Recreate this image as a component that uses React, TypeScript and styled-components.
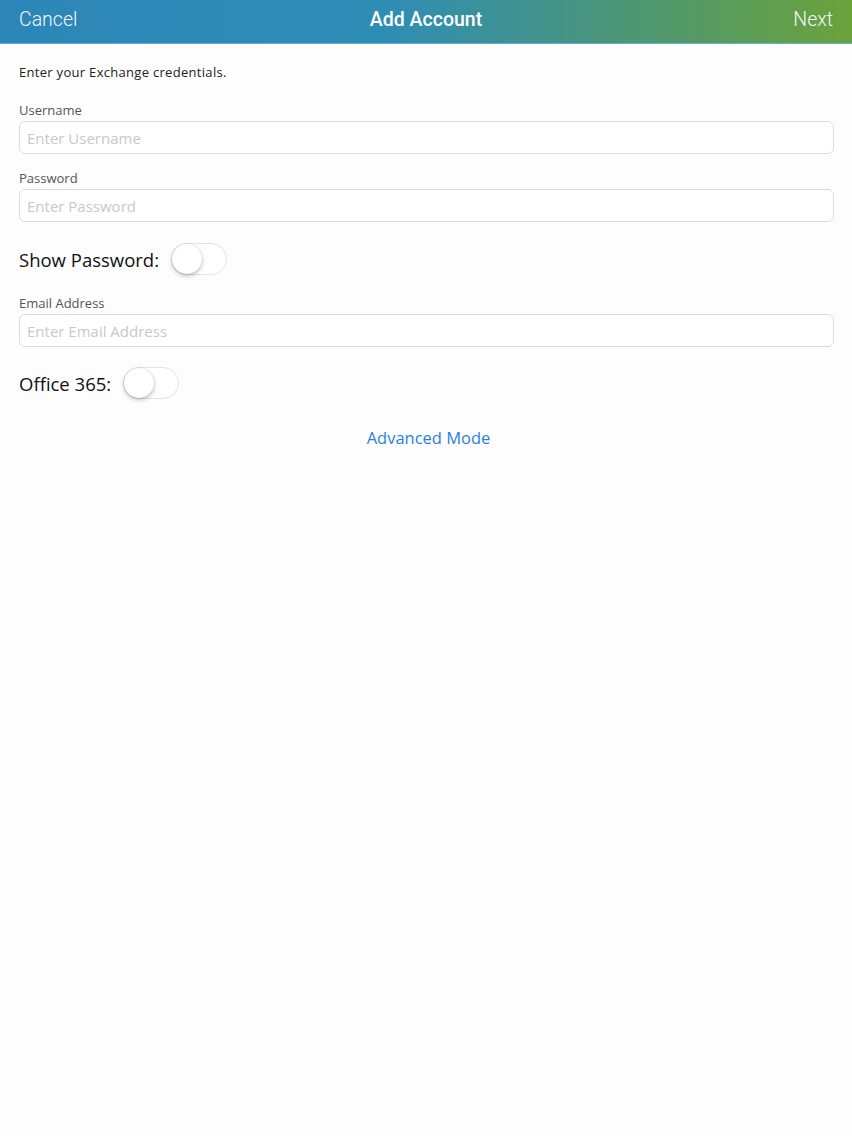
import React, { useState } from 'react';
import styled, { createGlobalStyle } from 'styled-components';

const GlobalStyle = createGlobalStyle`
  html, body {
    margin: 0;
    padding: 0;
    background: #fdfdfd;
    font-family: 'Open Sans', 'Liberation Sans', sans-serif;
  }
  * { box-sizing: border-box; }
`;

const Page = styled.div`
  width: 852px;
  min-height: 1136px;
  background: #fdfdfd;
`;

const NavBar = styled.div`
  height: 44px;
  display: flex;
  align-items: center;
  justify-content: space-between;
  padding: 0 19px 4px;
  background: linear-gradient(90deg, #2c86b8 0%, #2e8db5 45%, #4b9679 72%, #6aa23a 100%);
  border-bottom: 1px solid #66aed8;
  position: relative;
`;

const NavButton = styled.span`
  color: #f2f7fa;
  font-family: 'Roboto', 'Liberation Sans', sans-serif;
  font-size: 19.5px;
  font-weight: 300;
`;

const NavTitle = styled.span`
  position: absolute;
  left: 0;
  right: 0;
  top: 8px;
  text-align: center;
  color: #fff;
  font-family: 'Roboto', 'Liberation Sans', sans-serif;
  font-size: 19.5px;
  font-weight: 500;
  pointer-events: none;
`;

const Form = styled.div`
  padding: 19px 18px 0 19px;
  display: flex;
  flex-direction: column;
`;

const Intro = styled.div`
  font-size: 13px;
  color: #222;
  line-height: 18px;
  letter-spacing: 0.3px;
  margin-bottom: 21px;
`;

const Label = styled.div`
  font-size: 13px;
  color: #555;
  line-height: 16px;
  margin-bottom: 3px;
`;

const Input = styled.input`
  width: 100%;
  height: 33px;
  border: 1px solid #dcdcdc;
  border-radius: 6px;
  padding: 0 7px;
  font-family: inherit;
  font-size: 15px;
  background: #fff;
  outline: none;
  &::placeholder {
    color: #c8c8cc;
  }
`;

const Field = styled.div<{ $gap: number }>`
  margin-bottom: ${p => p.$gap}px;
`;

const ToggleRow = styled.div<{ $gap: number }>`
  display: flex;
  align-items: center;
  gap: 12px;
  height: 32px;
  margin-bottom: ${p => p.$gap}px;
`;

const ToggleLabel = styled.span`
  font-size: 18.5px;
  color: #111;
`;

const Track = styled.button<{ $on: boolean }>`
  width: 56px;
  height: 32px;
  border-radius: 16px;
  border: 1px solid #e4e4e4;
  background: ${p => (p.$on ? '#4cd964' : '#fff')};
  position: relative;
  padding: 0;
  cursor: pointer;
`;

const Knob = styled.span<{ $on: boolean }>`
  position: absolute;
  top: 0;
  left: ${p => (p.$on ? '24px' : '0')};
  width: 30px;
  height: 30px;
  border-radius: 50%;
  background: #fff;
  box-shadow: 0 2px 4px rgba(0, 0, 0, 0.25), 0 0 0 0.5px rgba(0, 0, 0, 0.08);
`;

const LinkButton = styled.div`
  align-self: center;
  color: #2b7fe0;
  font-size: 16.5px;
  margin-left: 4px;
`;

function Toggle() {
  const [on, setOn] = useState(false);
  return (
    <Track $on={on} onClick={() => setOn(!on)}>
      <Knob $on={on} />
    </Track>
  );
}

export default function App() {
  return (
    <Page>
      <GlobalStyle />
      <NavBar>
        <NavButton>Cancel</NavButton>
        <NavTitle>Add Account</NavTitle>
        <NavButton>Next</NavButton>
      </NavBar>
      <Form>
        <Intro>Enter your Exchange credentials.</Intro>
        <Field $gap={16}>
          <Label>Username</Label>
          <Input placeholder='Enter Username' />
        </Field>
        <Field $gap={21}>
          <Label>Password</Label>
          <Input placeholder='Enter Password' type='password' />
        </Field>
        <ToggleRow $gap={20}>
          <ToggleLabel>Show Password:</ToggleLabel>
          <Toggle />
        </ToggleRow>
        <Field $gap={20}>
          <Label>Email Address</Label>
          <Input placeholder='Enter Email Address' />
        </Field>
        <ToggleRow $gap={27}>
          <ToggleLabel>Office 365:</ToggleLabel>
          <Toggle />
        </ToggleRow>
        <LinkButton>Advanced Mode</LinkButton>
      </Form>
    </Page>
  );
}
